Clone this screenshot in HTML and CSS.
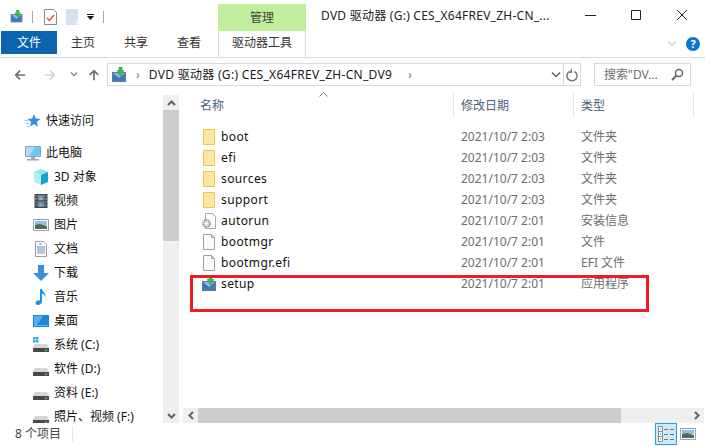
FILE: index.html
```html
<!DOCTYPE html>
<html lang="zh-CN">
<head>
  <meta charset="UTF-8" />
  <title>DVD 驱动器 (G:) CES_X64FREV_ZH-CN_DV9</title>
  <link rel="stylesheet" href="styles.css">
</head>
<body>
  <svg class="sprite" xmlns="http://www.w3.org/2000/svg">
    <symbol id="setup" viewBox="0 0 16 16">
      <path fill="#3f78c0" d="M1 5h14v10H1z"/>
      <path fill="#8db9e8" d="M1 5h14L8 11z"/>
      <path fill="none" stroke="#5f7d9e" d="M1.500 5.500h13v9h-13z"/>
      <path fill="#2fbf52" stroke="#1f9a3e" stroke-width=".5" d="M8 0h3v3.500h2L9.500 9 6 3.500h2z"/>
    </symbol>
    <symbol id="folder" viewBox="0 0 16 16">
      <path fill="#fbe6a2" stroke="#eec44f" d="M2.500 .5h11v15h-11z"/>
      <path fill="#fff3c9" d="M12 11h1v4h-1z"/>
    </symbol>
    <symbol id="file" viewBox="0 0 16 16">
      <path fill="#fbfbfb" stroke="#a0a0a0" d="M2.500 .5h8l3 3v12h-11z"/>
      <path fill="none" stroke="#a0a0a0" d="M10.500 .5v3h3"/>
    </symbol>
    <symbol id="gearfile" viewBox="0 0 16 16">
      <path fill="#fbfbfb" stroke="#a8a8a8" d="M4.500 .5h7l3 3v12h-10z"/>
      <circle cx="5.500" cy="10.500" r="3.500" fill="#ddd" stroke="#8a8a8a" stroke-width="1.500" stroke-dasharray="1.500 .7"/>
      <circle cx="5.500" cy="10.500" r="1.200" fill="#fff"/>
    </symbol>
    <symbol id="star" viewBox="0 0 16 16">
      <path fill="#2f8fe0" d="M9 1l1.800 4.600 4.700.3-3.700 3 1.300 4.800L9 11.100l-4.100 2.600 1.300-4.800-3.700-3 4.700-.3z"/>
      <path fill="#8cc4f0" d="M0 7h3v1H0zM1 10h3v1H1zM2 13h2v1H2z"/>
    </symbol>
    <symbol id="pc" viewBox="0 0 16 16">
      <path fill="#6ec6f7" stroke="#8fa3b5" d="M.5 1.500h15v10H.5z"/>
      <path fill="#a8def9" d="M1 2h9L4 11H1z"/>
      <path fill="#9aa7b3" d="M6 12h4v2H6zM2 14h12v1.500H2z"/>
    </symbol>
    <symbol id="cube" viewBox="0 0 16 16">
      <path fill="#8fe3ec" d="M8 0l7 3-7 3-7-3z"/>
      <path fill="#b4eef2" d="M1 3l7 3v10l-7-3z"/>
      <path fill="#12a5d2" d="M15 3L8 6v10l7-3z"/>
    </symbol>
    <symbol id="video" viewBox="0 0 16 16">
      <path fill="#444" d="M1.500 1h13v14h-13z"/>
      <path fill="#4d8ed0" d="M4.500 2h7v5.500h-7zM4.500 8.500h7V14h-7z"/>
      <path fill="#d7a03a" d="M6 5l2-2 2 4H6zM6 12l2-2 2 3H6z"/>
      <path fill="#ddd" d="M2.500 2.500h1v1h-1zM2.500 5.500h1v1h-1zM2.500 8.500h1v1h-1zM2.500 11.500h1v1h-1zM12.500 2.500h1v1h-1zM12.500 5.500h1v1h-1zM12.500 8.500h1v1h-1zM12.500 11.500h1v1h-1z"/>
    </symbol>
    <symbol id="picture" viewBox="0 0 16 16">
      <path fill="#fff" stroke="#a0a0a0" d="M.5 2.500h15v11H.5z"/>
      <path fill="#8fc0e8" d="M2 4h12v4H2z"/>
      <path fill="#4f6b58" d="M2 8l5-1 7 2v3H2z"/>
    </symbol>
    <symbol id="doc" viewBox="0 0 16 16">
      <path fill="#fff" stroke="#9a9a9a" d="M2.500 .5h8l3 3v12h-11z"/>
      <path fill="none" stroke="#3f8ed8" d="M6 3h3M4 6h8M4 8h8"/>
      <path fill="none" stroke="#888" d="M4 10h8M4 12h8"/>
    </symbol>
    <symbol id="download" viewBox="0 0 16 16">
      <path fill="#3a8fdc" d="M5 0h6v8h5l-8 8-8-8h5z"/>
    </symbol>
    <symbol id="music" viewBox="0 0 16 16">
      <path fill="#1e93e6" d="M7 0h2c.3 3 4 4 3.500 8-.7-2-2-3-3.500-3.300V12.500C9 15 6.500 16 5 16s-2.500-1-2.500-2.300C2.500 12 5 10.800 7 11.300z"/>
    </symbol>
    <symbol id="desktop" viewBox="0 0 16 16">
      <path fill="#1b86df" d="M0 2h16v12H0z"/>
      <path fill="#55aef0" d="M1 3h9L4 12H1z"/>
      <path fill="#bfe0f8" d="M1 12.500h14v.5H1z"/>
    </symbol>
    <symbol id="sysdrive" viewBox="0 0 16 16">
      <path fill="#29a9ea" d="M0 0h2.500v2.500H0zM3 0h2.500v2.500H3zM0 3h2.500v2.500H0zM3 3h2.500v2.500H3z"/>
      <path fill="#d6d6d6" d="M2 7h12l2 4H0z"/>
      <path fill="#4a4a4a" d="M0 11h16v4H0z"/>
      <path fill="#4bd14b" d="M12 12.500h2v1.500h-2z"/>
    </symbol>
    <symbol id="drive" viewBox="0 0 16 16">
      <path fill="#d6d6d6" d="M2 7h12l2 4H0z"/>
      <path fill="#4a4a4a" d="M0 11h16v4H0z"/>
      <path fill="#4bd14b" d="M12 12.500h2v1.500h-2z"/>
    </symbol>
  </svg>

  <header class="titlebar">
    <div class="quick">
      <svg class="icon quick-setup"><use href="#setup"/></svg>
      <span class="quick-sep"></span>
      <svg class="quick-props" viewBox="0 0 13 16">
        <path fill="#fff" stroke="#8a8a8a" d="M.5 .5h9l3 3v12H.5z"/>
        <path fill="none" stroke="#e8582a" stroke-width="1.500" d="M3 9l2.500 2.500L10 6"/>
      </svg>
      <svg class="quick-new" viewBox="0 0 13 16">
        <path fill="#d7e2f1" d="M0 0h12v16H0z"/>
        <path fill="#eef2f8" d="M10 12h3v4h-3z"/>
      </svg>
      <svg class="quick-more" viewBox="0 0 7 6">
        <path fill="#111" d="M0 0h7v1H0zM0 2h7L3.500 6z"/>
      </svg>
      <span class="quick-sep"></span>
    </div>
    <div class="context-tab">管理</div>
    <div class="window-title">DVD 驱动器 (G:) CES_X64FREV_ZH-CN_...</div>
    <div class="window-buttons">
      <svg class="win-btn" viewBox="0 0 46 16"><path stroke="#222" d="M18 8.500h11"/></svg>
      <svg class="win-btn" viewBox="0 0 46 16"><path fill="none" stroke="#222" d="M18.500 3.500h9v9h-9z"/></svg>
      <svg class="win-btn" viewBox="0 0 46 16"><path fill="none" stroke="#222" d="M18 3l10 10M28 3L18 13"/></svg>
    </div>
  </header>

  <nav class="ribbon">
    <div class="tab tab-file">文件</div>
    <div class="tab tab-home">主页</div>
    <div class="tab tab-share">共享</div>
    <div class="tab tab-view">查看</div>
    <div class="tab tab-tools">驱动器工具</div>
    <svg class="ribbon-collapse" viewBox="0 0 10 6"><path fill="none" stroke="#aaa" d="M1 .5l4 4 4-4"/></svg>
    <div class="help">?</div>
  </nav>

  <div class="addressrow">
    <div class="nav-buttons">
      <svg class="nav-arrow" viewBox="0 0 14 14"><path fill="none" stroke="#6d6d6d" stroke-width="2" d="M13 7H2M7 2L2 7l5 5"/></svg>
      <svg class="nav-arrow" viewBox="0 0 14 14"><path fill="none" stroke="#d5d5d5" stroke-width="2" d="M1 7h11M7 2l5 5-5 5"/></svg>
      <svg class="nav-down" viewBox="0 0 8 5"><path fill="none" stroke="#8a8a8a" stroke-width="1.500" d="M1 .5l3 3 3-3"/></svg>
      <svg class="nav-arrow nav-up" viewBox="0 0 14 14"><path fill="none" stroke="#6d6d6d" stroke-width="2" d="M7 13V2M2 7l5-5 5 5"/></svg>
    </div>
    <div class="addressbox">
      <svg class="icon"><use href="#setup"/></svg>
      <span class="crumb-arrow">›</span>
      <span class="crumb">DVD 驱动器 (G:) CES_X64FREV_ZH-CN_DV9</span>
      <span class="crumb-arrow">›</span>
      <svg class="address-drop" viewBox="0 0 10 6"><path fill="none" stroke="#666" stroke-width="1.500" d="M1 .5l4 4 4-4"/></svg>
      <div class="refresh">
        <svg viewBox="0 0 12 14" width="12" height="14"><path fill="none" stroke="#777" stroke-width="1.500" d="M8.500 3.500a5 5 0 1 1-5 0"/><path fill="#777" d="M3 0v5h-3z" transform="translate(3 0)"/></svg>
      </div>
    </div>
    <div class="searchbox">
      <span>搜索"DV...</span>
      <svg viewBox="0 0 13 13" width="13" height="13"><circle cx="8" cy="5" r="3.500" fill="none" stroke="#666" stroke-width="1.500"/><path stroke="#666" stroke-width="2" d="M5.500 7.500L1 12"/></svg>
    </div>
  </div>

  <main class="explorer">
    <aside class="sidebar">
      <div class="tree">
        <div class="tree-row top first"><svg class="icon"><use href="#star"/></svg>快速访问</div>
        <div class="tree-row top pc-row"><svg class="icon"><use href="#pc"/></svg>此电脑</div>
        <div class="tree-row"><svg class="icon"><use href="#cube"/></svg>3D 对象</div>
        <div class="tree-row"><svg class="icon"><use href="#video"/></svg>视频</div>
        <div class="tree-row"><svg class="icon"><use href="#picture"/></svg>图片</div>
        <div class="tree-row"><svg class="icon"><use href="#doc"/></svg>文档</div>
        <div class="tree-row"><svg class="icon"><use href="#download"/></svg>下载</div>
        <div class="tree-row"><svg class="icon"><use href="#music"/></svg>音乐</div>
        <div class="tree-row"><svg class="icon"><use href="#desktop"/></svg>桌面</div>
        <div class="tree-row"><svg class="icon"><use href="#sysdrive"/></svg>系统 (C:)</div>
        <div class="tree-row"><svg class="icon"><use href="#drive"/></svg>软件 (D:)</div>
        <div class="tree-row"><svg class="icon"><use href="#drive"/></svg>资料 (E:)</div>
        <div class="tree-row"><svg class="icon"><use href="#drive"/></svg>照片、视频 (F:)</div>
      </div>
      <div class="vscroll">
        <div class="scroll-btn"><svg viewBox="0 0 9 6" width="9" height="6"><path fill="none" stroke="#606060" stroke-width="2" d="M1 5l3.500-3.500L8 5"/></svg></div>
        <div class="vthumb"></div>
        <div class="vtrack"></div>
        <div class="scroll-btn"><svg viewBox="0 0 9 6" width="9" height="6"><path fill="none" stroke="#606060" stroke-width="2" d="M1 1l3.500 3.500L8 1"/></svg></div>
      </div>
    </aside>

    <section class="content">
      <div class="list">
        <div class="list-head">
          <svg class="sort-arrow" viewBox="0 0 9 5"><path fill="none" stroke="#888" d="M.5 4.500l4-4 4 4"/></svg>
          <div class="col col-name">名称</div>
          <div class="col col-date">修改日期</div>
          <div class="col col-type">类型</div>
          <div class="col col-extra"></div>
        </div>
        <div class="file-row"><div class="col-name"><svg class="icon"><use href="#folder"/></svg>boot</div><div class="col-date">2021/10/7 2:03</div><div class="col-type">文件夹</div></div>
        <div class="file-row"><div class="col-name"><svg class="icon"><use href="#folder"/></svg>efi</div><div class="col-date">2021/10/7 2:03</div><div class="col-type">文件夹</div></div>
        <div class="file-row"><div class="col-name"><svg class="icon"><use href="#folder"/></svg>sources</div><div class="col-date">2021/10/7 2:03</div><div class="col-type">文件夹</div></div>
        <div class="file-row"><div class="col-name"><svg class="icon"><use href="#folder"/></svg>support</div><div class="col-date">2021/10/7 2:03</div><div class="col-type">文件夹</div></div>
        <div class="file-row"><div class="col-name"><svg class="icon"><use href="#gearfile"/></svg>autorun</div><div class="col-date">2021/10/7 2:01</div><div class="col-type">安装信息</div></div>
        <div class="file-row"><div class="col-name"><svg class="icon"><use href="#file"/></svg>bootmgr</div><div class="col-date">2021/10/7 2:01</div><div class="col-type">文件</div></div>
        <div class="file-row"><div class="col-name"><svg class="icon"><use href="#file"/></svg>bootmgr.efi</div><div class="col-date">2021/10/7 2:01</div><div class="col-type">EFI 文件</div></div>
        <div class="file-row"><div class="col-name"><svg class="icon"><use href="#setup"/></svg>setup</div><div class="col-date">2021/10/7 2:01</div><div class="col-type">应用程序</div></div>
      </div>
      <div class="hscroll">
        <div class="scroll-btn"><svg viewBox="0 0 6 9" width="6" height="9"><path fill="none" stroke="#606060" stroke-width="2" d="M5 1L1.500 4.500 5 8"/></svg></div>
        <div class="hthumb"></div>
        <div class="htrack"></div>
        <div class="scroll-btn"><svg viewBox="0 0 6 9" width="6" height="9"><path fill="none" stroke="#606060" stroke-width="2" d="M1 1l3.500 3.500L1 8"/></svg></div>
      </div>
    </section>
  </main>

  <footer class="statusbar">
    <span class="status-text">8 个项目</span>
    <span class="status-sep"></span>
    <div class="view-toggle active">
      <svg viewBox="0 0 16 16" width="16" height="16">
        <path fill="#fff" stroke="#888" d="M.5 .5h4v15h-4z"/>
        <path stroke="#888" d="M1 5.500h3M1 10.500h3"/>
        <path fill="#555" d="M2 2.500h1v1H2zM2 7.500h1v1H2z"/>
        <path fill="#c33" d="M2 12.500h1v1H2z"/>
        <path stroke="#777" d="M6 3.500h4M12 3.500h4M6 8.500h4M12 8.500h4M6 13.500h4M12 13.500h4"/>
      </svg>
    </div>
    <div class="view-toggle">
      <svg class="icon"><use href="#picture"/></svg>
    </div>
  </footer>

  <div class="highlight"></div>
</body>
</html>
```

FILE: styles.css
```css
* {
  box-sizing: border-box;
}
html, body {
  height: 100%;
}
body {
  position: relative;
  width: 705px;
  height: 446px;
  margin: 0;
  overflow: hidden;
  background-color: #fff;
  color: #1a1a1a;
  font-family: "Noto Sans", "Noto Sans CJK SC", sans-serif;
  font-size: 12px;
  line-height: 16px;
}
.sprite {
  display: none;
}
.icon {
  display: block;
  flex: none;
  width: 16px;
  height: 16px;
}

/* title bar */
.titlebar {
  display: flex;
  height: 31px;
}
.quick {
  display: flex;
  align-items: center;
  width: 218px;
  padding: 2px 0 0 10px;
}
.quick-setup {
  width: 13px;
  height: 13px;
}
.quick-sep {
  width: 1px;
  height: 12px;
  margin-left: 9px;
  background-color: #a8a8a8;
}
.quick-props {
  width: 13px;
  height: 16px;
  margin-left: 11px;
}
.quick-new {
  width: 13px;
  height: 16px;
  margin-left: 9px;
}
.quick-more {
  width: 7px;
  height: 6px;
  margin-left: 8px;
}
.context-tab {
  width: 88px;
  margin-top: 4px;
  background-color: #c0ee9c;
  color: #444;
  text-align: center;
  line-height: 28px;
}
.window-title {
  width: 243px;
  padding: 8px 0 0 15px;
  white-space: nowrap;
  color: #222;
  letter-spacing: .25px;
}
.window-buttons {
  display: flex;
  margin-left: auto;
  padding-top: 7px;
  width: 138px;
}
.win-btn {
  width: 46px;
  height: 16px;
}

/* ribbon tabs */
.ribbon {
  display: flex;
  align-items: flex-start;
  height: 27px;
  padding-left: 1px;
  border-bottom: 1px solid #dadada;
}
.tab {
  height: 23px;
  line-height: 23px;
  text-align: center;
  color: #333;
}
.tab-file {
  width: 56px;
  background-color: #0a64ae;
  color: #fff;
}
.tab-home {
  width: 52px;
}
.tab-share {
  width: 54px;
}
.tab-view {
  width: 52px;
}
.tab-tools {
  width: 88px;
  height: 26px;
  margin-left: 3px;
  border-left: 1px solid #dadada;
  border-right: 1px solid #dadada;
  background-color: #fff;
  margin-bottom: -1px;
}
.ribbon-collapse {
  width: 10px;
  height: 6px;
  margin: 10px 0 0 361px;
}
.help {
  width: 14px;
  height: 14px;
  margin: 6px 0 0 9px;
  border-radius: 50%;
  background-color: #0a74d0;
  color: #fff;
  font-size: 11px;
  font-weight: bold;
  line-height: 14px;
  text-align: center;
}

/* address row */
.addressrow {
  display: flex;
  align-items: flex-start;
  height: 34px;
  padding-top: 5px;
}
.nav-buttons {
  display: flex;
  align-items: center;
  width: 107px;
  height: 23px;
  padding-left: 14px;
}
.nav-arrow {
  width: 12px;
  height: 12px;
  margin-right: 18px;
}
.nav-down {
  width: 8px;
  height: 5px;
  margin: 0 10px 0 -4px;
}
.nav-up {
  margin: 1px 0 0 0;
}
.addressbox {
  display: flex;
  align-items: center;
  width: 474px;
  height: 23px;
  padding-left: 3px;
  border: 1px solid #d9d9d9;
  background-color: #fff;
}
.crumb {
  margin: 0 7px 0 9px;
  white-space: nowrap;
  letter-spacing: .3px;
}
.crumb-arrow {
  color: #777;
  margin-left: 9px;
}
.address-drop {
  width: 10px;
  height: 6px;
  margin-left: auto;
  margin-right: 2px;
}
.refresh {
  display: flex;
  align-items: center;
  justify-content: center;
  width: 17px;
  height: 21px;
  border-left: 1px solid #d9d9d9;
}
.searchbox {
  display: flex;
  align-items: center;
  justify-content: space-between;
  width: 97px;
  height: 23px;
  margin-left: 13px;
  padding: 0 6px 0 9px;
  border: 1px solid #d9d9d9;
  color: #6d6d6d;
  white-space: nowrap;
}

/* main area */
.explorer {
  display: flex;
  height: 331px;
}
.sidebar {
  display: flex;
  flex: none;
  width: 183px;
  height: 331px;
  padding-top: 3px;
}
.tree {
  width: 163px;
  height: 328px;
  overflow: hidden;
  padding-top: 14px;
}
.tree-row {
  display: flex;
  align-items: center;
  gap: 5px;
  height: 24px;
  padding-left: 33px;
  white-space: nowrap;
  color: #111;
}
.tree-row.top {
  padding-left: 25px;
}
.tree-row.pc-row {
  margin-top: 8px;
}
.vscroll {
  display: flex;
  flex-direction: column;
  width: 16px;
  height: 328px;
  background-color: #efefef;
}
.scroll-btn {
  display: flex;
  flex: none;
  align-items: center;
  justify-content: center;
  width: 15px;
  height: 15px;
  background-color: #efefef;
}
.vscroll .scroll-btn {
  width: 16px;
}
.vthumb {
  flex: none;
  height: 131px;
  background-color: #cdcdcd;
}
.vtrack {
  flex: 1;
}
.content {
  display: flex;
  flex: 1;
  flex-direction: column;
  min-width: 0;
}
.list {
  flex: 1;
  min-height: 0;
}
.list-head {
  position: relative;
  display: flex;
  height: 34px;
  padding-bottom: 9px;
}
.sort-arrow {
  position: absolute;
  left: 136px;
  top: 0;
  width: 9px;
  height: 5px;
}
.col {
  padding: 6px 0 0 7px;
  border-right: 1px solid #e5e5e5;
  color: #4c607a;
}
.list-head .col-name {
  width: 271px;
  padding-left: 17px;
}
.list-head .col-date {
  width: 120px;
}
.list-head .col-type {
  width: 120px;
}
.col-extra {
  width: 10px;
  border-right: 0;
}
.file-row {
  display: flex;
  height: 21px;
  line-height: 21px;
  color: #6d6d6d;
}
.file-row .col-name {
  display: flex;
  align-items: center;
  gap: 4px;
  width: 278px;
  padding-left: 18px;
  color: #111;
  letter-spacing: .4px;
}
.file-row .col-date {
  width: 120px;
}
.file-row .col-type {
  width: 120px;
}
.hscroll {
  display: flex;
  flex: none;
  height: 15px;
  margin-right: 1px;
  background-color: #efefef;
}
.hthumb {
  flex: none;
  width: 423px;
  background-color: #cdcdcd;
}
.htrack {
  flex: 1;
}

/* status bar */
.statusbar {
  display: flex;
  align-items: center;
  height: 25px;
  padding: 0 6px 3px 15px;
  color: #444;
}
.status-text {
  width: 57px;
}
.status-sep {
  width: 1px;
  height: 16px;
  background-color: #e5e5e5;
  margin-right: auto;
}
.view-toggle {
  display: flex;
  align-items: center;
  justify-content: center;
  width: 22px;
  height: 22px;
}
.view-toggle.active {
  background-color: #cde8f8;
  border: 1px solid #26a0da;
}

/* red annotation drawn over the file list */
.highlight {
  position: absolute;
  left: 190px;
  top: 275px;
  width: 459px;
  height: 37px;
  border: 3px solid #ee1c25;
}
```
